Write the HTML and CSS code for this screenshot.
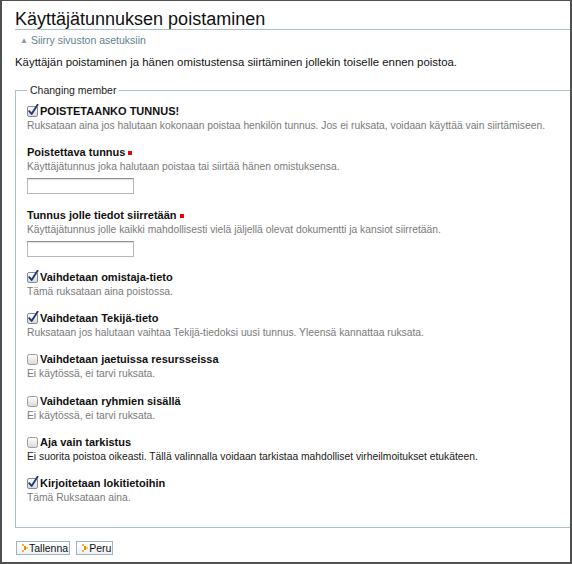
FILE: index.html
```
<!DOCTYPE html>
<html lang="fi">
<head>
<meta charset="utf-8">
<title>Käyttäjätunnuksen poistaminen</title>
<link rel="stylesheet" href="styles.css">
</head>
<body>
<div class="frame">
  <div class="page">
    <h1 class="title">Käyttäjätunnuksen poistaminen</h1>
    <div class="nav"><a class="nav-link" href="#"><span class="nav-arrow">▲</span>Siirry sivuston asetuksiin</a></div>
    <p class="intro">Käyttäjän poistaminen ja hänen omistustensa siirtäminen jollekin toiselle ennen poistoa.</p>
    <form class="form">
      <fieldset class="group">
        <legend class="legend">Changing member</legend>

        <div class="field">
          <label class="label"><svg class="cb" width="12" height="13" viewBox="0 0 12 13"><defs><linearGradient id="g1" x1="0" y1="0" x2="0" y2="1"><stop offset="0" stop-color="#ffffff"/><stop offset="1" stop-color="#d9d9d9"/></linearGradient></defs><rect x="0.5" y="2.5" width="10" height="10" rx="1.5" fill="url(#g1)" stroke="#8a8a8a"/><path d="M2.2 7.2 L4.6 10 L10.6 0.8" fill="none" stroke="#1d3b7c" stroke-width="1.9" stroke-linecap="round" stroke-linejoin="round"/></svg>POISTETAANKO TUNNUS!</label>
          <div class="help">Ruksataan aina jos halutaan kokonaan poistaa henkilön tunnus. Jos ei ruksata, voidaan käyttää vain siirtämiseen.</div>
        </div>

        <div class="field">
          <label class="label">Poistettava tunnus<span class="req"></span></label>
          <div class="help">Käyttäjätunnus joka halutaan poistaa tai siirtää hänen omistuksensa.</div>
          <input class="text" type="text">
        </div>

        <div class="field">
          <label class="label">Tunnus jolle tiedot siirretään<span class="req"></span></label>
          <div class="help">Käyttäjätunnus jolle kaikki mahdollisesti vielä jäljellä olevat dokumentti ja kansiot siirretään.</div>
          <input class="text" type="text">
        </div>

        <div class="field">
          <label class="label"><svg class="cb" width="12" height="13" viewBox="0 0 12 13"><rect x="0.5" y="2.5" width="10" height="10" rx="1.5" fill="url(#g1)" stroke="#8a8a8a"/><path d="M2.2 7.2 L4.6 10 L10.6 0.8" fill="none" stroke="#1d3b7c" stroke-width="1.9" stroke-linecap="round" stroke-linejoin="round"/></svg>Vaihdetaan omistaja-tieto</label>
          <div class="help">Tämä ruksataan aina poistossa.</div>
        </div>

        <div class="field">
          <label class="label"><svg class="cb" width="12" height="13" viewBox="0 0 12 13"><rect x="0.5" y="2.5" width="10" height="10" rx="1.5" fill="url(#g1)" stroke="#8a8a8a"/><path d="M2.2 7.2 L4.6 10 L10.6 0.8" fill="none" stroke="#1d3b7c" stroke-width="1.9" stroke-linecap="round" stroke-linejoin="round"/></svg>Vaihdetaan Tekijä-tieto</label>
          <div class="help">Ruksataan jos halutaan vaihtaa Tekijä-tiedoksi uusi tunnus. Yleensä kannattaa ruksata.</div>
        </div>

        <div class="field">
          <label class="label"><svg class="cb" width="12" height="13" viewBox="0 0 12 13"><rect x="0.5" y="2.5" width="10" height="10" rx="2" fill="url(#g1)" stroke="#9a9a9a"/></svg>Vaihdetaan jaetuissa resursseissa</label>
          <div class="help">Ei käytössä, ei tarvi ruksata.</div>
        </div>

        <div class="field">
          <label class="label"><svg class="cb" width="12" height="13" viewBox="0 0 12 13"><rect x="0.5" y="2.5" width="10" height="10" rx="2" fill="url(#g1)" stroke="#9a9a9a"/></svg>Vaihdetaan ryhmien sisällä</label>
          <div class="help">Ei käytössä, ei tarvi ruksata.</div>
        </div>

        <div class="field">
          <label class="label"><svg class="cb" width="12" height="13" viewBox="0 0 12 13"><rect x="0.5" y="2.5" width="10" height="10" rx="2" fill="url(#g1)" stroke="#9a9a9a"/></svg>Aja vain tarkistus</label>
          <div class="help help-dark">Ei suorita poistoa oikeasti. Tällä valinnalla voidaan tarkistaa mahdolliset virheilmoitukset etukäteen.</div>
        </div>

        <div class="field">
          <label class="label"><svg class="cb" width="12" height="13" viewBox="0 0 12 13"><rect x="0.5" y="2.5" width="10" height="10" rx="1.5" fill="url(#g1)" stroke="#8a8a8a"/><path d="M2.2 7.2 L4.6 10 L10.6 0.8" fill="none" stroke="#1d3b7c" stroke-width="1.9" stroke-linecap="round" stroke-linejoin="round"/></svg>Kirjoitetaan lokitietoihin</label>
          <div class="help">Tämä Ruksataan aina.</div>
        </div>
      </fieldset>

      <div class="buttons">
        <button class="btn" type="button"><svg class="btn-icon" width="6" height="8" viewBox="0 0 6 8"><rect x="0" y="0" width="2" height="2" fill="#f6b21c"/><rect x="2" y="2" width="2" height="2" fill="#f28c00"/><rect x="4" y="3" width="2" height="2" fill="#f9c860"/><rect x="0" y="6" width="2" height="2" fill="#f6b21c"/><rect x="2" y="4" width="2" height="2" fill="#f28c00"/></svg>Tallenna</button>
        <button class="btn" type="button"><svg class="btn-icon" width="6" height="8" viewBox="0 0 6 8"><rect x="0" y="0" width="2" height="2" fill="#f6b21c"/><rect x="2" y="2" width="2" height="2" fill="#f28c00"/><rect x="4" y="3" width="2" height="2" fill="#f9c860"/><rect x="0" y="6" width="2" height="2" fill="#f6b21c"/><rect x="2" y="4" width="2" height="2" fill="#f28c00"/></svg>Peru</button>
      </div>
    </form>
  </div>
</div>
</body>
</html>
```
FILE: styles.css
```
* { box-sizing: border-box; }
html, body { margin: 0; padding: 0; background: #ffffff; }
body { font-family: "Liberation Sans", Arial, sans-serif; color: #111; }

.frame {
  width: 572px;
  height: 564px;
  border-top: 1px solid #505050;
  border-left: 2px solid #505050;
  border-right: 2px solid #505050;
  border-bottom: 2px solid #505050;
  overflow: hidden;
  background: #fff;
}

.page {
  width: 620px;
  padding-left: 13px;
}

.title {
  margin: 8px 0 0;
  font-size: 18px;
  line-height: 20px;
  font-weight: normal;
  color: #111;
  border-bottom: 1px solid #a9c2ce;
}

.nav {
  margin-top: 3px;
  padding-left: 5px;
  font-size: 10.5px;
  line-height: 14px;
}
.nav-link { color: #5f7f90; text-decoration: none; }
.nav-arrow { font-size: 8px; color: #7f9cac; margin-right: 3px; vertical-align: 1px; }

.intro {
  margin: 7px 0 0;
  font-size: 11.4px;
  line-height: 14px;
  color: #111;
}

.form { margin: 14px 0 0; }

.group {
  margin: 0;
  padding: 7px 0 9px 11px;
  border: 1px solid #a9c2ce;
  min-width: 0;
}

.legend {
  padding: 0 3px;
  font-size: 10.5px;
  line-height: 14px;
  color: #222;
}

.field { margin-bottom: 13.3px; }

.label {
  display: block;
  font-size: 11px;
  line-height: 15px;
  font-weight: bold;
  color: #111;
  white-space: nowrap;
}

.cb {
  display: inline-block;
  vertical-align: -2px;
  margin-right: 1px;
}

.req {
  display: inline-block;
  width: 4px;
  height: 4px;
  background: #e8000b;
  margin-left: 3px;
  vertical-align: 1px;
}

.help {
  font-size: 10.3px;
  line-height: 13px;
  color: #7a7a7a;
  white-space: nowrap;
}
.help-dark { color: #1a1a1a; }

.text {
  display: block;
  width: 107px;
  height: 16px;
  margin: 5px 0 2px;
  padding: 0 2px;
  border: 1px solid #b8b8b8;
  border-top-color: #8f8f8f;
  box-shadow: inset 0 1px 1px rgba(0,0,0,0.12);
  background: #fff;
  font-family: "Liberation Sans", Arial, sans-serif;
  font-size: 10px;
}

.buttons {
  display: flex;
  gap: 6px;
  margin-top: 13px;
  padding-left: 1px;
}

.btn {
  display: flex;
  align-items: center;
  height: 14px;
  margin: 0;
  padding: 0 1px 0 5px;
  border: 1px solid #9fb4c2;
  border-radius: 0;
  background: linear-gradient(#ffffff, #eef1f4);
  font-family: "Liberation Sans", Arial, sans-serif;
  font-size: 10.5px;
  line-height: 12px;
  color: #111;
}

.btn-icon { margin-right: 1px; flex: none; }
```
